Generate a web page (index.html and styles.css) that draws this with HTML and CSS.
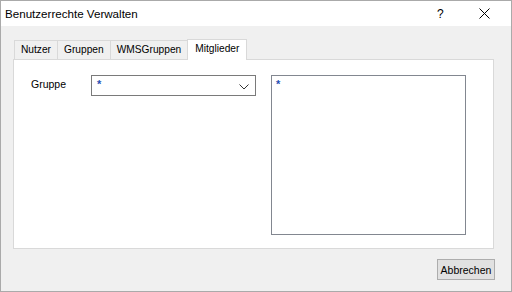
FILE: index.html
```html
<!DOCTYPE html>
<html>
<head>
<meta charset="utf-8">
<link rel="stylesheet" href="styles.css">
</head>
<body>
<div class="window">
  <div class="titlebar">
    <span class="title">Benutzerrechte Verwalten</span>
    <span class="help">?</span>
    <span class="close">
      <svg width="11" height="11" viewBox="0 0 11 11"><path d="M0.5 0.5 L10.5 10.5 M10.5 0.5 L0.5 10.5" stroke="#000" stroke-width="1" fill="none"/></svg>
    </span>
  </div>
  <div class="content">
    <div class="tabs">
      <div class="tab">Nutzer</div>
      <div class="tab">Gruppen</div>
      <div class="tab">WMSGruppen</div>
      <div class="tab active">Mitglieder</div>
    </div>
    <div class="panel">
      <div class="label">Gruppe</div>
      <div class="combo">
        <span class="star">*</span>
        <svg class="chev" width="10" height="6" viewBox="0 0 10 6"><path d="M0.5 0.5 L5 5 L9.5 0.5" stroke="#333" stroke-width="1" fill="none"/></svg>
      </div>
      <div class="list"><span class="star">*</span></div>
    </div>
    <div class="footer">
      <button class="btn">Abbrechen</button>
    </div>
  </div>
</div>
</body>
</html>
```
FILE: styles.css
```css
html, body { margin: 0; padding: 0; }
body { font-family: "Liberation Sans", Arial, sans-serif; font-size: 10.5px; color: #000; }
.window {
  width: 512px; height: 292px; box-sizing: border-box;
  border: 1px solid #aaaaaa; background: #f0f0f0;
  display: flex; flex-direction: column;
}
.titlebar {
  height: 25px; background: #fff; display: flex; align-items: center;
  padding-left: 4px; font-size: 11.6px;
}
.title { flex: 1; }
.help { width: 12px; margin-right: 30px; font-size: 12px; }
.close { width: 11px; height: 11px; margin-right: 21px; display: flex; }
.content { flex: 1; display: flex; flex-direction: column; padding: 13px 17px 0 12px; }
.tabs { display: flex; margin-left: 1px; height: 20px; align-items: flex-end; position: relative; z-index: 1; font-size: 10.2px; }
.tab {
  height: 19px; box-sizing: border-box; border: 1px solid #d9d9d9; border-bottom: none;
  margin-left: -1px; padding: 0 6px; line-height: 18px; background: #f0f0f0;
}
.tab:first-child { margin-left: 0; }
.tab.active { height: 21px; margin-bottom: -1px; background: #fff; padding: 0 7px; line-height: 18px; }
.panel {
  height: 190px; box-sizing: border-box; border: 1px solid #d9d9d9; background: #fff;
  display: flex; align-items: flex-start; padding: 15px 0 0 17px;
}
.label { width: 60px; line-height: 18px; }
.combo {
  width: 165px; height: 21px; box-sizing: border-box; border: 1px solid #7a7a7a;
  display: flex; align-items: flex-start; justify-content: space-between; padding: 2px 6px 0 5px;
}
.star { color: #1f4fb4; font-size: 11px; line-height: 12px; font-weight: bold; }
.chev { margin-top: 6px; }
.list {
  width: 195px; height: 160px; box-sizing: border-box; border: 1px solid #828790;
  margin-left: 15px; padding: 2px 4px;
}
.footer { display: flex; justify-content: flex-end; padding-top: 10px; margin-right: -1px; }
.btn {
  width: 58px; height: 21px; box-sizing: border-box; border: 1px solid #adadad;
  background: #e1e1e1; font-family: "Liberation Sans", Arial, sans-serif; font-size: 10.5px;
  padding: 0; color: #000;
}
```
